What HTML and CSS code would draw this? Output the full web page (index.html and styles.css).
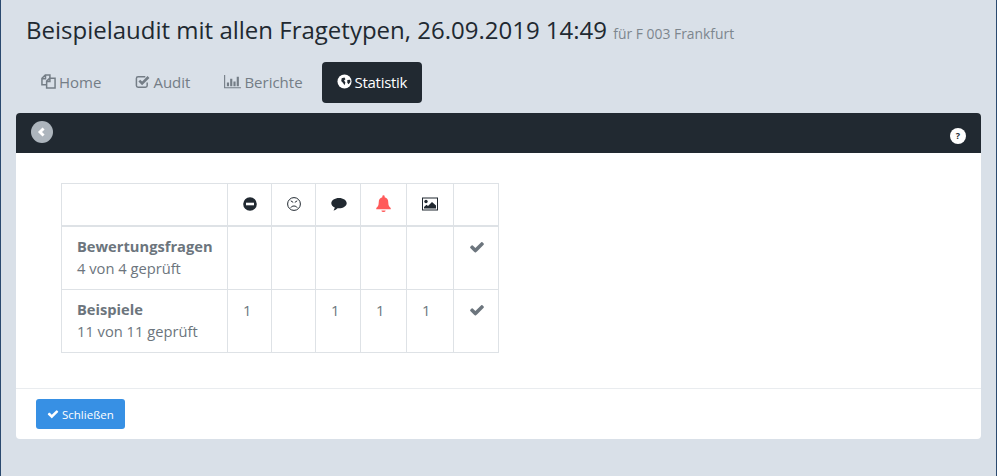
FILE: index.html
```html
<!DOCTYPE html>
<html>
<head lang="de">
    <meta charset="UTF-8">
    <title>Statistik</title>
    <link rel="stylesheet" href="styles.css">
</head>
<body>
<svg class="defs" width="0" height="0">
    <symbol id="i-check" viewBox="0 0 1792 1792"><path d="M1671 566q0 40-28 68l-724 724-136 136q-28 28-68 28t-68-28l-136-136-362-362q-28-28-28-68t28-68l136-136q28-28 68-28t68 28l294 295 656-657q28-28 68-28t68 28l136 136q28 28 28 68z"/></symbol>
</svg>

<h1 class="title">Beispielaudit mit allen Fragetypen, 26.09.2019 14:49 <small>für F 003 Frankfurt</small></h1>

<!-- Navigation -->
<ul class="tabs">
    <li><a href="#">
        <svg class="ico" viewBox="0 0 16 16" fill="none" stroke="currentColor" stroke-width="1.600"><path d="M5.500 11.500H1V4.600L4.600 1H9.500V4.500M4.800 1.200V5H1.200"/><path d="M6 15V7.600L9.200 4.400H15V15ZM9.500 4.600V8H6.200"/></svg>
        Home</a></li>
    <li><a href="#">
        <svg class="ico" viewBox="0 0 16 16" fill="none" stroke="currentColor"><path stroke-width="1.600" d="M13 9v3.200a1.800 1.800 0 0 1-1.800 1.800H3.300a1.800 1.800 0 0 1-1.800-1.800V4.800A1.800 1.800 0 0 1 3.300 3H11"/><path stroke-width="2.800" d="M4.600 7l3 3L14.400 3.200"/></svg>
        Audit</a></li>
    <li><a href="#">
        <svg class="ico wide" viewBox="0 0 18 16" fill="currentColor"><path d="M0 1h1.200v13H18v1.300H0zM3 9h2.300v4H3zM6.500 5h2.300v8H6.500zM10 8h2.300v5H10zM13.500 3h2.300v10h-2.300z"/></svg>
        Berichte</a></li>
    <li class="active"><a href="#">
        <svg class="ico" viewBox="0 0 16 16"><circle cx="8" cy="8" r="7.500" fill="currentColor"/><path fill="#212931" d="M5 4.500L8 3.800 9 5.500 7.500 7 9 9 8 12 6.500 9.500 4.500 7.500zM11 6.500l3-.5.300 2.500-2 2.500-1.300-1.800z"/></svg>
        Statistik</a></li>
</ul>

<div class="card">
    <div class="card-head">
        <a class="back" href="#"><svg viewBox="0 0 10 10" fill="none" stroke="#fff" stroke-width="2.400"><path d="M6.300 2L3.300 5l3 3"/></svg></a>
        <a class="help" href="#">?</a>
    </div>

    <div class="card-body">
        <table class="stats">
            <thead>
                <tr>
                    <th class="c-name"></th>
                    <th class="c-1"><svg class="ti" viewBox="0 0 14 14"><circle cx="7" cy="7" r="6.800" fill="#212931"/><rect x="3" y="5.700" width="8" height="2.600" fill="#fff"/></svg></th>
                    <th class="c-2"><svg class="ti" viewBox="0 0 14 14" fill="none" stroke="#212931" stroke-width="1"><circle cx="7" cy="7" r="6.400"/><path d="M3.800 10.600C5 8.500 9 8.500 10.200 10.600M3.800 3.800l2.400 1.600M10.200 3.800L7.800 5.400"/></svg></th>
                    <th class="c-3"><svg class="ti wide" viewBox="0 0 16 14" fill="#212931"><path d="M8 1C3.800 1 .300 3.300.300 6.200c0 1.900 1.400 3.500 3.500 4.400-.2 1-.7 1.900-1.300 2.900 1.500-.2 3-1.300 4-2.300.5.100 1 .1 1.500.1 4.200 0 7.700-2.300 7.700-5.100S12.200 1 8 1z"/></svg></th>
                    <th class="c-4"><svg class="ti bell" viewBox="0 0 14 16" fill="#ff5a5a"><path d="M7 .300a1.100 1.100 0 0 1 1.100 1.100v.6c2.300.5 3.400 2.300 3.400 5 0 3 .9 4 2.300 5.200v1.100H.200v-1.100C1.600 11 2.500 10 2.500 7c0-2.700 1.100-4.500 3.400-5v-.6A1.100 1.100 0 0 1 7 .300zM5 14.500h4a2 1.500 0 0 1-4 0z"/></svg></th>
                    <th class="c-5"><svg class="ti wide" viewBox="0 0 16 13"><rect x=".5" y=".5" width="15" height="12" fill="#fff" stroke="#212931"/><circle cx="4" cy="4" r="1.700" fill="#212931"/><path fill="#212931" d="M2 11V9.500L4.500 7.200 6 8.500 10 4.500 14 8v3z"/></svg></th>
                    <th class="c-6"></th>
                </tr>
            </thead>
            <tbody>
                <tr>
                    <td class="name"><b>Bewertungsfragen</b><br>4 von 4 geprüft</td>
                    <td></td>
                    <td></td>
                    <td></td>
                    <td></td>
                    <td></td>
                    <td><svg class="tick"><use href="#i-check"/></svg></td>
                </tr>
                <tr>
                    <td class="name"><b>Beispiele</b><br>11 von 11 geprüft</td>
                    <td>1</td>
                    <td></td>
                    <td>1</td>
                    <td>1</td>
                    <td>1</td>
                    <td><svg class="tick"><use href="#i-check"/></svg></td>
                </tr>
            </tbody>
        </table>
    </div>

    <div class="card-foot">
        <a class="btn" href="#"><svg class="btn-ico"><use href="#i-check"/></svg> Schließen</a>
    </div>
</div>
</body>
</html>
```
FILE: styles.css
```css
html, body {
    height: 100%;
}
body {
    margin: 0;
    box-sizing: border-box;
    padding: 0 15px 0 15px;
    background-color: #d9e0e8;
    border-left: 1px solid #2b4a6f;
    border-right: 1px solid #2b4a6f;
    font-family: "Open Sans", "Noto Sans", sans-serif;
    font-size: 14px;
    color: #6c757d;
    overflow: hidden;
}
a {
    text-decoration: none;
    color: inherit;
}
.defs {
    position: absolute;
}

/* Titel */
.title {
    margin: 0;
    padding: 13px 0 0 10px;
    height: 49px;
    box-sizing: border-box;
    font-size: 24px;
    line-height: 33px;
    font-weight: 400;
    color: #212931;
}
.title small {
    font-size: 13.900px;
    color: #7d868e;
}

/* Navigation */
.tabs {
    display: flex;
    list-style: none;
    margin: 13px 0 10px 10px;
    padding: 0;
    height: 41px;
    font-size: 15px;
}
.tabs a {
    display: flex;
    align-items: center;
    height: 39px;
    padding: 0 15px 2px 15px;
    border-radius: 4px;
    color: #747d86;
}
.tabs li + li {
    margin-left: 4px;
}
.tabs li.active a {
    background-color: #212931;
    color: #fff;
    letter-spacing: -.3px;
}
.ico {
    width: 15px;
    height: 15px;
    margin-right: 3px;
}
.ico.wide {
    width: 17px;
}

/* Karte */
.card {
    background-color: #fff;
    border-radius: 4px;
    height: 326px;
}
.card-head {
    display: flex;
    justify-content: space-between;
    height: 40px;
    box-sizing: border-box;
    padding: 8px 15px 0 15px;
    background-color: #212931;
    border-radius: 4px 4px 0 0;
}
.back {
    display: block;
    width: 22px;
    height: 22px;
    border-radius: 50%;
    background-color: #adb5bd;
}
.back svg {
    display: block;
    width: 12px;
    height: 12px;
    margin: 5px;
}
.help {
    width: 16px;
    height: 16px;
    margin: 7px 0 0 0;
    border-radius: 50%;
    background-color: #fff;
    color: #212931;
    font-size: 9px;
    font-weight: 700;
    line-height: 16px;
    text-align: center;
}
.card-body {
    height: 236px;
    box-sizing: border-box;
    padding: 30px 0 0 45px;
    border-bottom: 1px solid #e9ecef;
}

/* Tabelle */
.stats {
    border-collapse: collapse;
    table-layout: fixed;
    width: 437px;
}
.stats th, .stats td {
    border: 1px solid #dee2e6;
    padding: 0 0 0 15px;
    text-align: left;
    vertical-align: top;
}
.stats thead th {
    height: 39px;
    padding-bottom: 2px;
    border-bottom-width: 2px;
    vertical-align: middle;
}
.stats td {
    height: 63px;
    padding-top: 9px;
    box-sizing: border-box;
    font-size: 14.700px;
    line-height: 22px;
    color: #6c757d;
}
.stats td.name {
    padding-top: 8px;
}
.stats td.name b {
    font-weight: 700;
}
.c-name { width: 150px; }
.c-1, .c-2 { width: 28px; }
.c-3 { width: 29px; }
.c-4 { width: 30px; }
.c-5 { width: 31px; }
.c-6 { width: 29px; }
.ti {
    display: block;
    width: 14px;
    height: 14px;
}
.ti.wide {
    width: 16px;
}
.ti.bell {
    width: 15px;
    height: 17px;
}
.tick {
    display: block;
    width: 16px;
    height: 16px;
    margin-top: 3px;
    fill: #6c757d;
}

/* Footer */
.card-foot {
    padding: 10px 20px;
}
.btn {
    display: inline-flex;
    align-items: center;
    height: 30px;
    box-sizing: border-box;
    padding: 0 11px;
    border-radius: 3px;
    background-color: #3790e4;
    color: #fff;
    font-size: 11.500px;
}
.btn-ico {
    width: 12px;
    height: 12px;
    margin-right: 3px;
    fill: #fff;
}
```
